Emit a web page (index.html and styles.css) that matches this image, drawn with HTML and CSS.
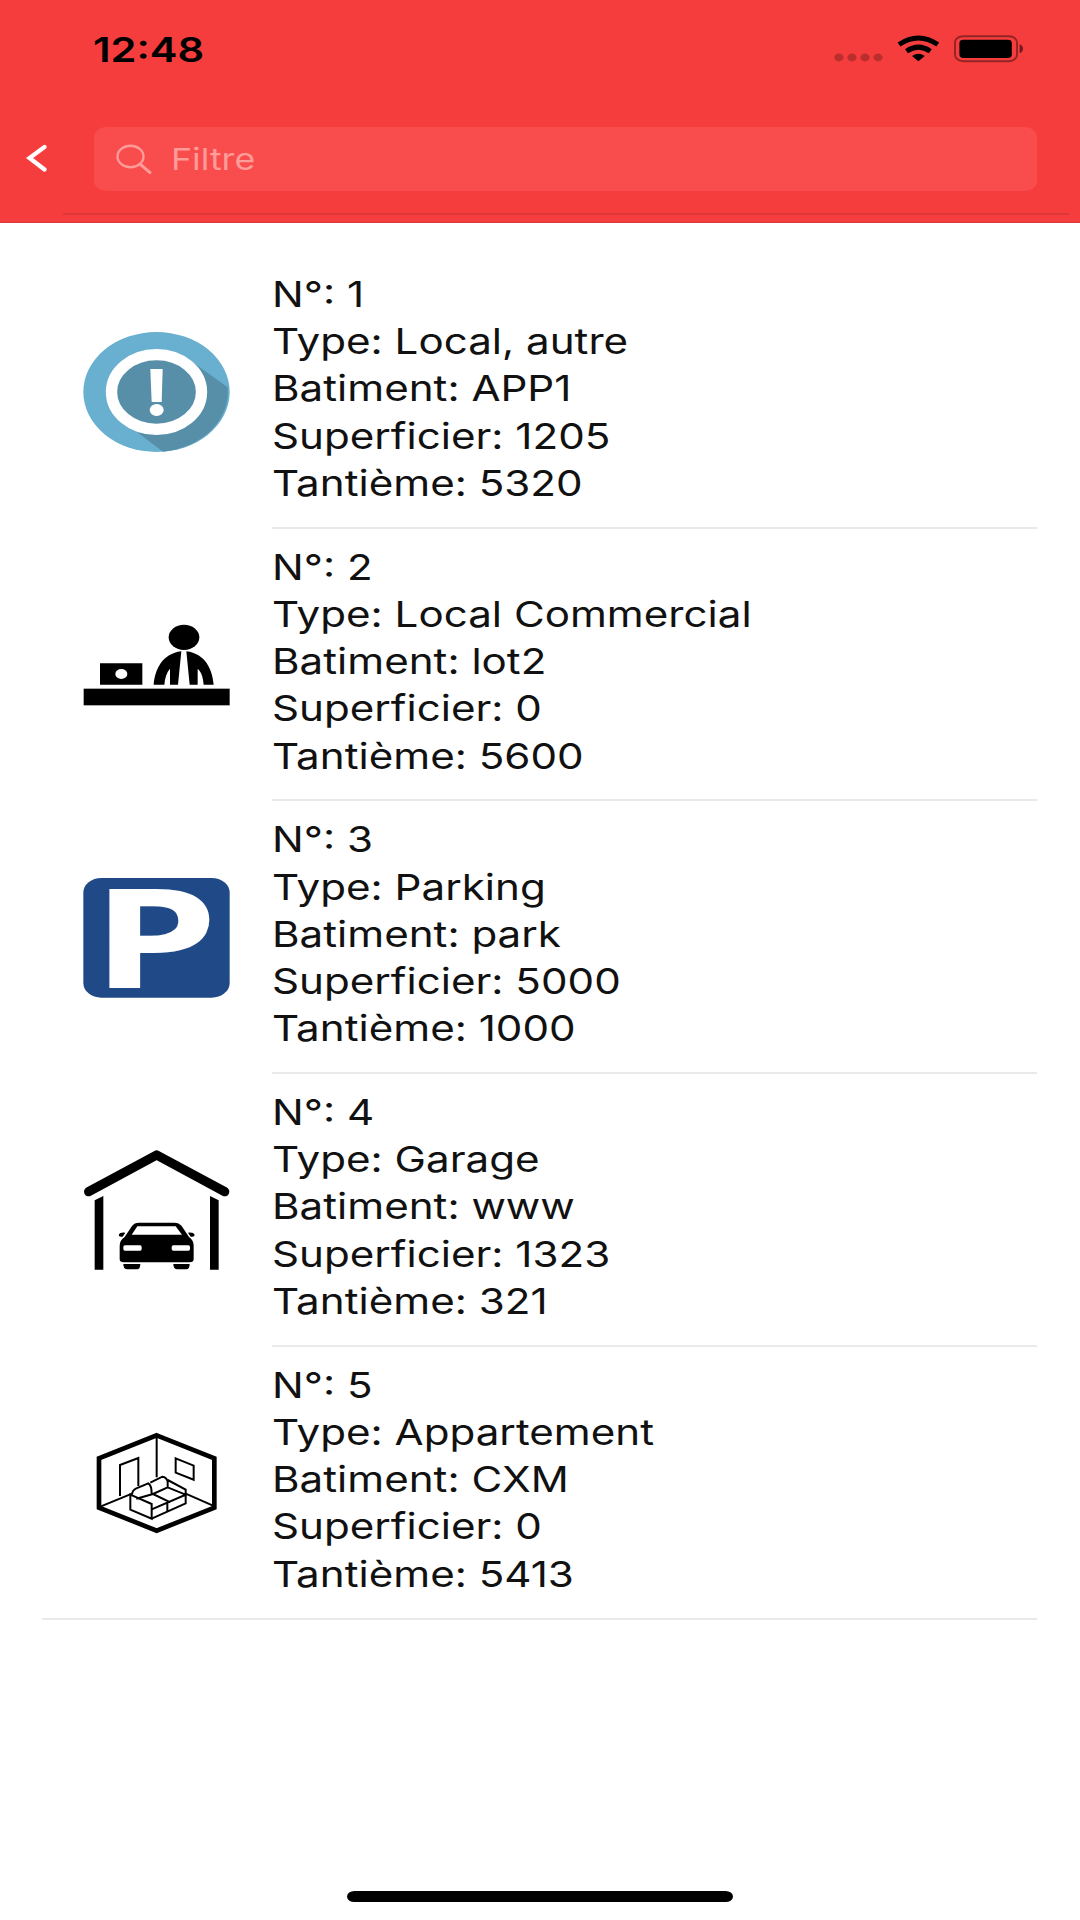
FILE: index.html
```html
<!DOCTYPE html>
<html lang="fr">
<head>
  <meta charset="UTF-8" />
  <title>Lots</title>
  <link rel="stylesheet" href="styles.css">
</head>
<body>
  <header class="header">
    <!-- Status bar -->
    <div class="status-bar">
      <div class="time"><span>12:48</span></div>
      <svg class="status-icons" viewBox="834 30 190 36">
        <g fill="#000" fill-opacity="0.24">
          <ellipse cx="838.9" cy="57.5" rx="4.6" ry="3.9" />
          <ellipse cx="852" cy="57.5" rx="4.6" ry="3.9" />
          <ellipse cx="865" cy="57.5" rx="4.6" ry="3.9" />
          <ellipse cx="878" cy="57.5" rx="4.6" ry="3.9" />
        </g>
        <g fill="none" stroke="#000" stroke-width="5">
          <path d="M899 44.5Q918.4 31.5 937.8 44.5" />
          <path d="M906.5 51.3Q918.4 43 930.3 51.3" />
        </g>
        <path d="M912 56Q918.4 51.5 924.8 56L918.4 61.2Z" />
        <rect x="955" y="36.2" width="62" height="25" rx="8" ry="6.5" fill="none" stroke="#000" stroke-opacity="0.4" stroke-width="1.9" />
        <rect x="959.4" y="39.8" width="52.4" height="18.2" rx="4" ry="3.4" />
        <path d="M1019.6 44.3Q1023 45.7 1023 48.7T1019.6 53.2Z" fill-opacity="0.55" />
      </svg>
    </div>

    <!-- Search -->
    <div class="search-bar">
      <svg class="back" viewBox="0 0 22 30">
        <path d="M18.500 3L3.500 14L18.500 25.500" fill="none" stroke="#fff" stroke-width="4.2" stroke-linecap="round" />
      </svg>
      <div class="search">
        <svg class="search-icon" viewBox="0 0 36 30">
          <ellipse cx="14.5" cy="12.5" rx="13" ry="10.8" fill="none" stroke="#ff9b98" stroke-width="2.4" />
          <path d="M24 20L34 28.6" stroke="#ff9b98" stroke-width="3" stroke-linecap="round" />
        </svg>
        <span class="placeholder">Filtre</span>
      </div>
    </div>
    <div class="header-line"></div>
  </header>

  <ul class="lots">
    <li class="lot">
      <svg class="icon" viewBox="40 64 441 360">
        <ellipse cx="260.500" cy="244" rx="219.500" ry="180" fill="#68afd0" />
        <path d="M371 156L474 230A219.500 180 0 0 1 280 423L190 355Z" fill="#578fa9" />
        <ellipse cx="260.500" cy="244" rx="135" ry="112" fill="#578fa9" stroke="#fff" stroke-width="34" />
        <path d="M242 175H279L276 274H246Z" fill="#fff" />
        <ellipse cx="261" cy="298" rx="21" ry="18" fill="#fff" />
      </svg>
      <div class="info">
        <div class="text">
          <p>N°: 1</p>
          <p>Type: Local, autre</p>
          <p>Batiment: APP1</p>
          <p>Superficier: 1205</p>
          <p>Tantième: 5320</p>
        </div>
      </div>
    </li>

    <li class="lot">
      <svg class="icon" viewBox="40 12 441 360">
        <rect x="42" y="263" width="438" height="50" />
        <path d="M91 187H218V251H91Z" />
        <ellipse cx="155" cy="219" rx="18" ry="15" fill="#fff" />
        <ellipse cx="343" cy="109" rx="46" ry="38" />
        <path d="M252 251C256 205 278 158 335 151L325 251H301V203C291 214 286 230 284 251Z" />
        <path d="M432 251C428 205 407 158 350 151L360 251H384V203C396 214 400 230 402 251Z" />
      </svg>
      <div class="info">
        <div class="text">
          <p>N°: 2</p>
          <p>Type: Local Commercial</p>
          <p>Batiment: lot2</p>
          <p>Superficier: 0</p>
          <p>Tantième: 5600</p>
        </div>
      </div>
    </li>

    <li class="lot">
      <svg class="icon" viewBox="40 51 441 360">
        <rect x="41" y="51" width="439" height="359" rx="54" ry="44" fill="#204a87" />
        <text class="parking" transform="translate(65 380) scale(1.46 1)" fill="#fff">P</text>
      </svg>
      <div class="info">
        <div class="text">
          <p>N°: 3</p>
          <p>Type: Parking</p>
          <p>Batiment: park</p>
          <p>Superficier: 5000</p>
          <p>Tantième: 1000</p>
        </div>
      </div>
    </li>

    <li class="lot">
      <svg class="icon" viewBox="40 59 441 360">
        <path d="M57 184L261 74L465 184" fill="none" stroke="#000" stroke-width="28" stroke-linecap="round" stroke-linejoin="round" />
        <path d="M75 210L101 197V418H75ZM447 210L421 197V418H447Z" />
        <path d="M187 287Q194 277 208 277H314Q328 277 336 287L358 320Q372 330 372 346V386Q372 396 360 396H162Q150 396 150 386V346Q150 330 165 320Z" />
        <path d="M203 288H318L337 313H186Z" fill="#fff" />
        <rect x="161" y="345" width="55" height="16" rx="5" fill="#fff" />
        <rect x="306" y="345" width="55" height="16" rx="5" fill="#fff" />
        <path d="M161 401H212Q212 417 202 417H173Q161 417 161 401ZM311 401H360Q360 417 350 417H323Q311 417 311 401Z" />
        <path d="M167 307L159 319Q147 321 147 314Q150 305 167 307ZM355 307L363 319Q375 321 375 314Q372 305 355 307Z" />
      </svg>
      <div class="info">
        <div class="text">
          <p>N°: 4</p>
          <p>Type: Garage</p>
          <p>Batiment: www</p>
          <p>Superficier: 1323</p>
          <p>Tantième: 321</p>
        </div>
      </div>
    </li>

    <li class="lot">
      <svg class="icon" viewBox="40 35 441 360">
        <g fill="none" stroke="#000" stroke-width="6">
          <path d="M261 72L434 141V289L261 358L88 289V141Z" stroke-width="14" />
          <path d="M261 75V198M92 286L187 247M430 283L348 247" />
          <path d="M151 254V161L206 140V224" />
          <path d="M318 141L372 163V205L318 184Z" />
          <path d="M182 250L246 278V322L182 295Z" />
          <path d="M187 250Q188 236 200 231L236 216Q246 222 246 248M242 214L278 196Q290 197 294 210V228L250 248L200 262M294 206L348 235V276L246 322M250 248L302 273M294 228L348 250L246 294M293 276V299" />
        </g>
      </svg>
      <div class="info">
        <div class="text">
          <p>N°: 5</p>
          <p>Type: Appartement</p>
          <p>Batiment: CXM</p>
          <p>Superficier: 0</p>
          <p>Tantième: 5413</p>
        </div>
      </div>
    </li>
  </ul>

  <div class="home-indicator"></div>
</body>
</html>
```

FILE: styles.css
```css
* {
  box-sizing: border-box;
}

body {
  font-family: Inter, "Liberation Sans", sans-serif;
  background: #fff;
  color: #111;
  display: flex;
  flex-direction: column;
  height: 1920px;
  margin: 0;
}

.header {
  background: #f63d3d;
  height: 223px;
  border-bottom: 1px solid #dc3a3a;
}

.status-bar {
  display: flex;
  justify-content: space-between;
  padding: 30px 56px 0 93px;
  height: 126.5px;
}

.time {
  font-size: 34px;
  font-weight: 600;
  line-height: 39px;
  color: #000;
}

.time span {
  display: inline-block;
  transform: scaleX(1.225);
  transform-origin: left;
}

.status-icons {
  width: 190px;
  height: 36px;
}

.search-bar {
  display: flex;
  align-items: center;
  padding: 0 43px 0 26px;
}

.back {
  width: 22px;
  height: 30px;
  margin-right: 45.5px;
}

.search {
  flex: 1;
  display: flex;
  align-items: center;
  height: 64px;
  padding-left: 22px;
  background: #f94c4c;
  border-radius: 12px / 10px;
}

.search-icon {
  width: 36px;
  height: 30px;
  margin-right: 19px;
}

.placeholder {
  font-size: 30px;
  color: #ff9b98;
  transform: scaleX(1.19);
  transform-origin: left;
}

.header-line {
  height: 2px;
  margin: 22px 11px 0 63px;
  background: #de3838;
}

.lots {
  list-style: none;
  margin: 33px 43px 0 42px;
  padding: 0;
}

.lot {
  display: flex;
  align-items: center;
  height: 272.7px;
  padding-left: 41px;
}

.icon {
  width: 147px;
  height: 120px;
  margin-right: 42px;
  overflow: visible;
}

.info {
  flex: 1;
  height: 100%;
  padding-top: 15px;
  border-bottom: 2px solid #eaeaea;
}

.lot:last-child {
  height: 273.7px;
  border-bottom: 2px solid #eaeaea;
}

.lot:last-child .info {
  border-bottom: none;
}

.text {
  width: 500px;
  font-size: 35.5px;
  line-height: 47.2px;
  transform: scaleX(1.187);
  transform-origin: left;
}

.text p {
  margin: 0;
}

.parking {
  font-family: "Open Sans", sans-serif;
  font-size: 416px;
  font-weight: 700;
}

.home-indicator {
  width: 386px;
  height: 11px;
  margin: auto auto 18px;
  background: #000;
  border-radius: 8px / 6px;
}
```
